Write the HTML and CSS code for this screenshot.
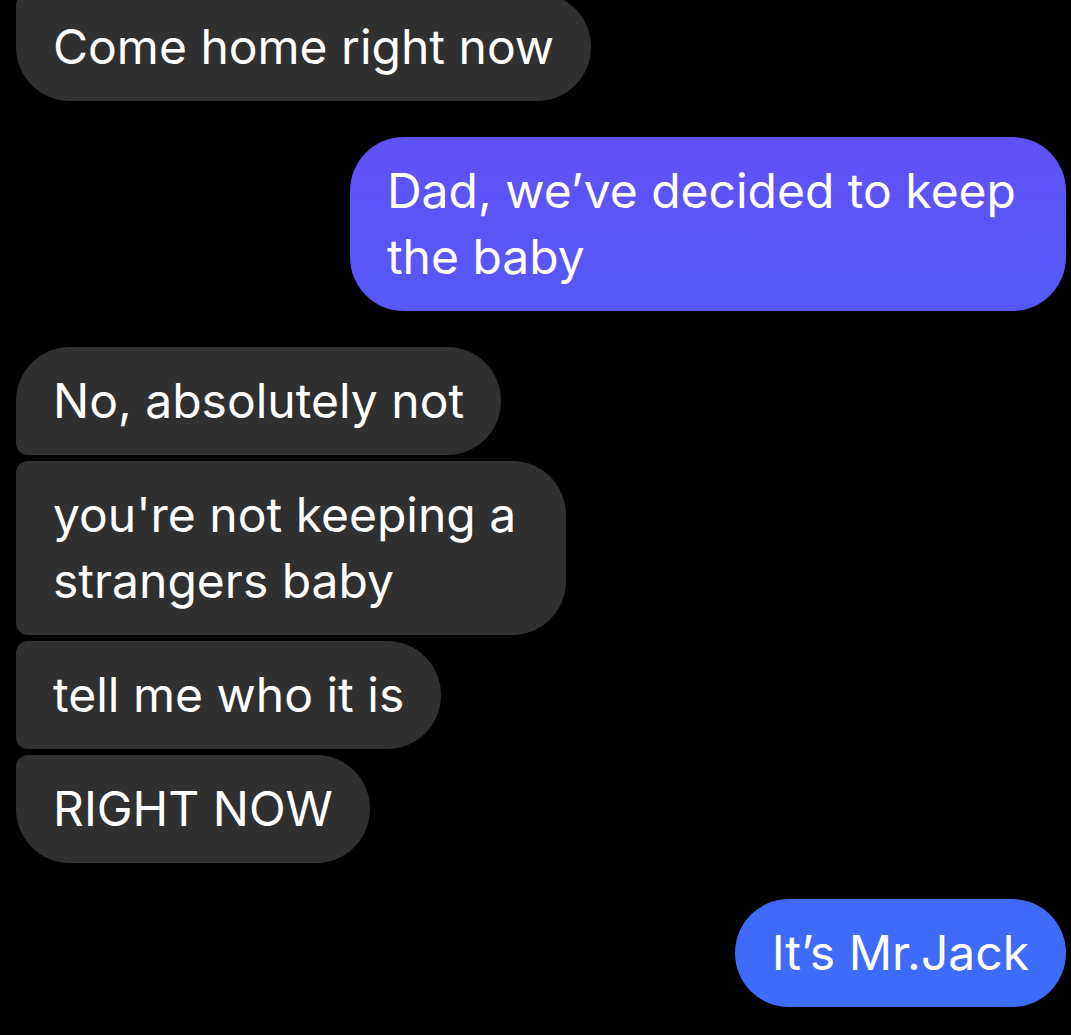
FILE: index.html
```html
<!DOCTYPE html>
<html lang="en">
<head>
<meta charset="utf-8">
<meta name="viewport" content="width=device-width, initial-scale=1">
<title>Messages</title>
<link rel="stylesheet" href="styles.css">
</head>
<body>
<main class="thread">
  <section class="group received">
    <p class="bubble last clipped">Come home right now</p>
  </section>
  <section class="group sent">
    <p class="bubble violet">Dad, we’ve decided to keep<br>the baby</p>
  </section>
  <section class="group received">
    <p class="bubble first">No, absolutely not</p>
    <p class="bubble middle wrapped">you're not keeping a<br>strangers baby</p>
    <p class="bubble middle">tell me who it is</p>
    <p class="bubble last">RIGHT NOW</p>
  </section>
  <section class="group sent">
    <p class="bubble blue">It’s Mr.Jack</p>
  </section>
</main>
</body>
</html>
```

FILE: styles.css
```css
body {
  margin: 0;
  background: #000;
  color: #fff;
  font-family: Inter, "Liberation Sans", sans-serif;
  font-size: 48px;
  line-height: 66px;
}

.thread {
  display: flex;
  flex-direction: column;
  gap: 36px;
  padding: 0 5px 28px 16px;
}

.group {
  display: flex;
  flex-direction: column;
  gap: 6px;
}

.received {
  align-items: flex-start;
}

.sent {
  align-items: flex-end;
}

.bubble {
  margin: 0;
  padding: 21px 37px;
  border-radius: 54px;
  background: #303030;
}

.first {
  border-bottom-left-radius: 12px;
}

.middle {
  border-top-left-radius: 12px;
  border-bottom-left-radius: 12px;
}

.last {
  border-top-left-radius: 12px;
}

.clipped {
  margin-top: -7px;
}

.wrapped {
  padding-right: 50px;
}

.violet {
  padding-right: 50px;
  background: linear-gradient(#6051f5, #5558f8);
}

.blue {
  background: linear-gradient(#4069f8, #3d6df8);
}
```
